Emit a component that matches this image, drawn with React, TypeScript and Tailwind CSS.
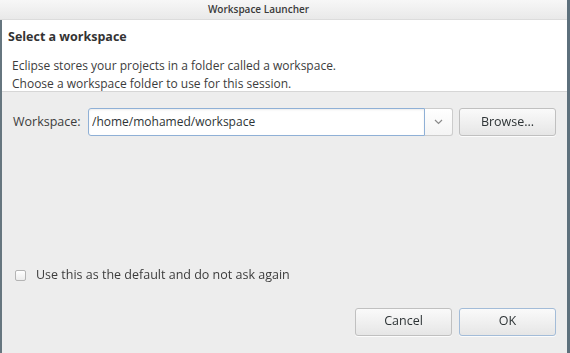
/** Workspace Launcher dialog (Eclipse startup, GTK look) */

import { useState } from 'react';

function Button({ label, focused = false }: { label: string; focused?: boolean }) {
  return (
    <button
      className={`w-[97px] h-[28px] rounded-[3px] border bg-gradient-to-b from-[#fafafa] to-[#e6e6e6] text-[12.5px] text-[#2e3436] shadow-[0_1px_0_rgba(255,255,255,0.8)] ${
        focused ? 'border-[#a3bcd8]' : 'border-[#c0c0c0]'
      }`}
    >
      {label}
    </button>
  );
}

export default function App() {
  const [path, setPath] = useState('/home/mohamed/workspace');
  const [remember, setRemember] = useState(false);

  return (
    <div
      className="w-[570px] h-[353px] flex flex-col bg-[#ededed] border-r-[3px] border-[#5d707c] text-[#2e3436] overflow-hidden"
      style={{ fontFamily: '"Open Sans", "DejaVu Sans", sans-serif' }}
    >
      {/* Title bar */}
      <div className="h-[20px] flex-none flex items-center justify-center pr-[50px] bg-gradient-to-b from-[#f7f7f7] to-[#e9e9e9] border-b border-[#dcdcdc]">
        <span className="text-[10px] font-semibold text-[#3a3a3a]">Workspace Launcher</span>
      </div>

      <div className="flex-1 flex flex-col border-l-2 border-[#66767f]">
        {/* Header */}
        <div className="h-[72px] flex-none bg-white border-b border-[#d6d6d6] pl-[6px] pt-[8px]">
          <h1 className="text-[12.5px] font-bold leading-[18px] text-[#333]">Select a workspace</h1>
          <div className="pl-[4px] pt-[11px] text-[12px] leading-[18px] text-[#3c3c3c]">
            <p>Eclipse stores your projects in a folder called a workspace.</p>
            <p>Choose a workspace folder to use for this session.</p>
          </div>
        </div>

        {/* Workspace row */}
        <div className="flex items-center mt-[16px] pl-[11px] h-[28px]">
          <span className="w-[75px] text-[12.5px] text-[#3c3c3c]">Workspace:</span>
          <div className="flex h-[28px] w-[365px]">
            <div className="flex-1 flex items-center border border-[#8fb0d6] rounded-l-[3px] bg-white shadow-[inset_0_1px_2px_rgba(0,0,0,0.08)] pl-[3px]">
              <input
                autoFocus
                value={path}
                onChange={(e) => setPath(e.target.value)}
                className="w-full bg-transparent outline-none text-[12px] text-[#2e3436] caret-[#2e3436]"
              />
            </div>
            <div className="w-[28px] flex items-center justify-center border border-l-0 border-[#cccccc] rounded-r-[3px] bg-gradient-to-b from-white to-[#f4f4f4]">
              <svg width="9" height="6" viewBox="0 0 9 6">
                <path d="M1 1 L4.5 4.5 L8 1" fill="none" stroke="#8a8a8a" strokeWidth="1.2" />
              </svg>
            </div>
          </div>
          <div className="ml-[6px]">
            <Button label="Browse..." />
          </div>
        </div>

        {/* Remember checkbox */}
        <label className="flex items-center mt-[130px] pl-[13px] gap-[10px]">
          <input
            type="checkbox"
            checked={remember}
            onChange={(e) => setRemember(e.target.checked)}
            className="appearance-none w-[11px] h-[11px] rounded-[2px] border border-[#b4b4b4] bg-gradient-to-b from-white to-[#ececec]"
          />
          <span className="text-[12.5px] text-[#3c3c3c]">Use this as the default and do not ask again</span>
        </label>

        {/* Buttons */}
        <div className="flex justify-end gap-[7px] mt-[23px] pr-[11px]">
          <Button label="Cancel" />
          <Button label="OK" focused />
        </div>
      </div>
    </div>
  );
}
